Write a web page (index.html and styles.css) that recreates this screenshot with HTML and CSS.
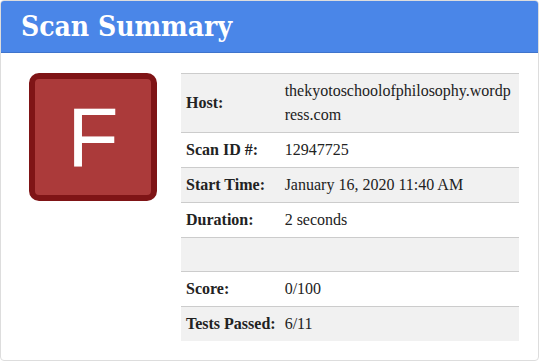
FILE: index.html
```html
<!DOCTYPE html>
<html lang="en">
<head>
  <meta charset="UTF-8">
  <title>Scan Summary</title>
  <link rel="stylesheet" href="styles.css">
</head>
<body>
  <div class="card">
    <div class="card-header">
      <h1>Scan Summary</h1>
    </div>
    <div class="card-body">
      <div class="grade">F</div>
      <table class="summary">
        <tr>
          <th>Host:</th>
          <td>thekyotoschoolofphilosophy.wordpress.com</td>
        </tr>
        <tr>
          <th>Scan ID #:</th>
          <td>12947725</td>
        </tr>
        <tr>
          <th>Start Time:</th>
          <td>January 16, 2020 11:40 AM</td>
        </tr>
        <tr>
          <th>Duration:</th>
          <td>2 seconds</td>
        </tr>
        <tr>
          <th></th>
          <td></td>
        </tr>
        <tr>
          <th>Score:</th>
          <td>0/100</td>
        </tr>
        <tr>
          <th>Tests Passed:</th>
          <td>6/11</td>
        </tr>
      </table>
    </div>
  </div>
</body>
</html>
```

FILE: styles.css
```css
body {
  margin: 0;
  font-family: 'Liberation Serif', 'Times New Roman', serif;
  color: #222;
  background: #fff;
}

.card {
  width: 537px;
  border: 1px solid #ddd;
  border-radius: 4px;
  overflow: hidden;
}

.card-header {
  background-color: #4a86e8;
  border-bottom: 1px solid #3f74cc;
  height: 51px;
  display: flex;
  align-items: center;
  padding-left: 20px;
}

.card-header h1 {
  margin: 0;
  color: #fff;
  font-family: 'DejaVu Serif Condensed', 'DejaVu Serif', serif;
  font-weight: bold;
  font-size: 28px;
}

.card-body {
  display: flex;
  align-items: flex-start;
  gap: 24px;
  padding: 20px 19px 19px 28px;
}

.grade {
  width: 116px;
  height: 116px;
  flex-shrink: 0;
  border: 6px solid #7f1416;
  border-radius: 10px;
  background-color: #ab3a3a;
  color: #fff;
  font-family: 'Liberation Sans', Arial, sans-serif;
  font-size: 84px;
  display: flex;
  align-items: center;
  justify-content: center;
}

.summary {
  flex: 1;
  border-collapse: collapse;
  font-size: 16px;
  line-height: 24px;
}

.summary tr {
  border-top: 1px solid #ccc;
  height: 34px;
}

.summary tr:nth-child(odd) {
  background-color: #f1f1f1;
}

.summary th {
  text-align: left;
  white-space: nowrap;
  padding: 5px 4px 5px 5px;
  width: 1px;
}

.summary td {
  padding: 5px 5px;
  word-break: break-all;
}
```
